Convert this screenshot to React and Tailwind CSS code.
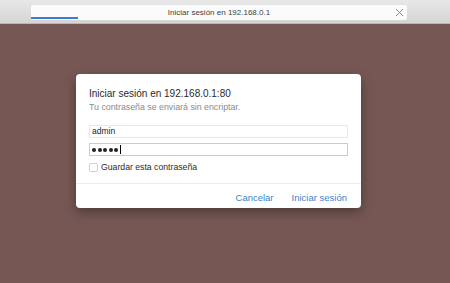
export default function App() {
  return (
    <div className="w-[450px] h-[283px] flex flex-col bg-[#765754] overflow-hidden" style={{ fontFamily: '"Liberation Sans", Arial, sans-serif' }}>
      <div className="h-[24px] shrink-0 bg-gradient-to-b from-[#e8e8e8] to-[#d4d4d4] border-b border-[#b8b8b8] pl-[31px] pr-[43px] pt-[5px]">
        <div className="relative h-[15px] bg-[#fbfbfb] rounded-[2px] flex items-center justify-center text-[8px] text-[#404040]">
          <span>Iniciar sesión en 192.168.0.1</span>
          <svg className="absolute right-[3px] top-[3px]" width="9" height="9" viewBox="0 0 9 9"><path d="M1 1L8 8M8 1L1 8" stroke="#8a8a8a" strokeWidth="1" /></svg>
          <div className="absolute left-0 bottom-[1px] w-[47px] h-[2px] bg-[#3b7bd3]" />
        </div>
      </div>
      <div className="flex pt-[50px] pl-[76px]">
        <div className="w-[285px] h-[134px] bg-white rounded-[4px] shadow-[0_4px_12px_rgba(0,0,0,0.35)] flex flex-col">
          <div className="px-[13px] pt-[13px]">
            <div className="text-[10px] text-[#2a2a2a] leading-[13px]">Iniciar sesión en 192.168.0.1:80</div>
            <div className="text-[8.8px] text-[#8a8a8a] leading-[12px] mt-[1px]">Tu contraseña se enviará sin encriptar.</div>
            <div className="mt-[12px] h-[13px] border border-[#e8e8e8] text-[8.5px] text-[#222] pl-[2px] flex items-center">admin</div>
            <div className="mt-[5px] h-[13px] border border-[#b9cfe2] pl-[2px] flex items-center gap-[1.5px]">
              <span className="w-[4px] h-[4px] rounded-full bg-[#222]" />
              <span className="w-[4px] h-[4px] rounded-full bg-[#222]" />
              <span className="w-[4px] h-[4px] rounded-full bg-[#222]" />
              <span className="w-[4px] h-[4px] rounded-full bg-[#222]" />
              <span className="w-[4px] h-[4px] rounded-full bg-[#222]" />
              <span className="w-[1px] h-[9px] bg-black" />
            </div>
            <div className="mt-[5px] flex items-center gap-[3px]">
              <div className="w-[9px] h-[9px] border border-[#d0d0d0] rounded-[2px] bg-white" />
              <span className="text-[8.7px] text-[#2a2a2a]">Guardar esta contraseña</span>
            </div>
          </div>
          <div className="mt-[9px] border-t border-[#ededed]" />
          <div className="flex justify-end gap-[18px] pr-[14px] pt-[7px] text-[9.5px] text-[#3b82c8]">
            <span>Cancelar</span>
            <span>Iniciar sesión</span>
          </div>
        </div>
      </div>
    </div>
  );
}
